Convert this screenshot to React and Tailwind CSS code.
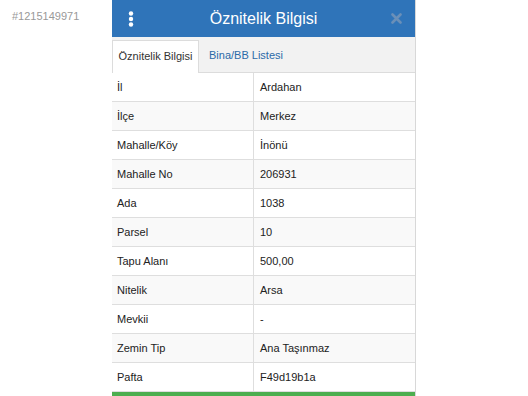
import React from "react";

const rows = [
  ["İl", "Ardahan"],
  ["İlçe", "Merkez"],
  ["Mahalle/Köy", "İnönü"],
  ["Mahalle No", "206931"],
  ["Ada", "1038"],
  ["Parsel", "10"],
  ["Tapu Alanı", "500,00"],
  ["Nitelik", "Arsa"],
  ["Mevkii", "-"],
  ["Zemin Tip", "Ana Taşınmaz"],
  ["Pafta", "F49d19b1a"],
];

export default function App() {
  return (
    <div
      className="relative w-[528px] h-[396px] overflow-hidden bg-white"
      style={{ fontFamily: '"Liberation Sans", Arial, sans-serif' }}
    >
      <div className="absolute left-[12px] top-[8px] text-[11px] text-[#999]">#1215149971</div>
      <div className="ml-[112px] w-[304px] h-[396px] flex flex-col border-r border-[#d8d8d8]">
        <div className="h-[37px] bg-[#2f74b9] flex items-center px-[15px] relative">
          <svg width="6" height="16" viewBox="0 0 6 16" className="ml-[1px]">
            <circle cx="3" cy="2.5" r="2.2" fill="#fff" />
            <circle cx="3" cy="8" r="2.2" fill="#fff" />
            <circle cx="3" cy="13.5" r="2.2" fill="#fff" />
          </svg>
          <div className="flex-1 text-center text-white text-[16px] pl-[2px]">Öznitelik Bilgisi</div>
          <svg width="11" height="11" viewBox="0 0 11 11" className="mr-[-2px]">
            <path d="M1.5 1.5 L9.5 9.5 M9.5 1.5 L1.5 9.5" stroke="#6a8fb8" strokeWidth="2.6" strokeLinecap="round" />
          </svg>
        </div>
        <div className="h-[36px] bg-[#f2f2f2] flex items-end border-b border-[#dcdcdc]">
          <div className="h-[33px] w-[87px] bg-white border border-b-0 border-[#dcdcdc] flex items-center justify-center text-[11px] text-[#333] mb-[-1px] pb-[1px]">
            Öznitelik Bilgisi
          </div>
          <div className="h-[33px] flex items-center pl-[10px] pb-[1px] text-[11px] text-[#2b6aa8]">Bina/BB Listesi</div>
        </div>
        <div className="flex flex-col">
          {rows.map(([k, v], i) => (
            <div
              key={k}
              className={`h-[29px] flex border-b border-[#dedede] text-[11px] text-[#222] ${i % 2 === 0 ? "bg-white" : "bg-[#f9f9f9]"}`}
            >
              <div className="w-[142px] flex items-center pl-[5px] border-r border-[#dedede]">{k}</div>
              <div className="flex-1 flex items-center pl-[6px]">{v}</div>
            </div>
          ))}
        </div>
        <div className="h-[4px] bg-[#4cae4f]" />
      </div>
    </div>
  );
}
